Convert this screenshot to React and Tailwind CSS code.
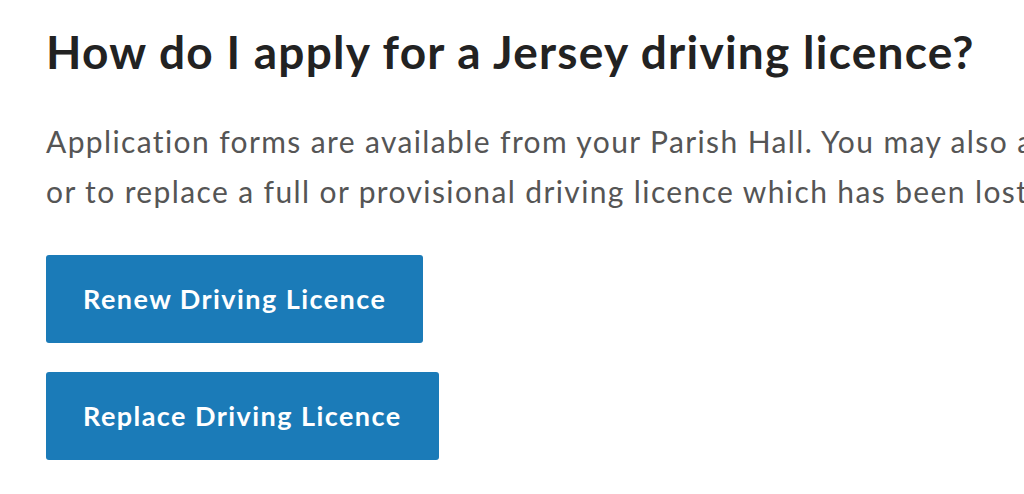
export default function App() {
  return (
    <div className="w-[1024px] h-[494px] overflow-hidden bg-white font-['Lato','Liberation_Sans',sans-serif]">
      <div className="pl-[46px] pt-[22px] w-[1500px]">
        <h1 className="text-[46px] leading-[60px] font-bold text-[#222222] tracking-[1.25px]">
          How do I apply for a Jersey driving licence?
        </h1>
        <p className="mt-[34px] text-[30px] leading-[50px] text-[#555555] tracking-[1.38px] whitespace-nowrap">
          Application forms are available from your Parish Hall. You may also apply online to renew your driving licence
          <br />
          or to replace a full or provisional driving licence which has been lost, stolen or destroyed.
        </p>
        <div className="mt-[39px] flex flex-col items-start gap-[29px]">
          <button className="h-[88px] px-[37px] rounded-[3px] bg-[#1b7bb8] text-white text-[27px] font-bold tracking-[1.45px]">
            Renew Driving Licence
          </button>
          <button className="h-[88px] px-[37px] rounded-[3px] bg-[#1b7bb8] text-white text-[27px] font-bold tracking-[1.45px]">
            Replace Driving Licence
          </button>
        </div>
      </div>
    </div>
  )
}
